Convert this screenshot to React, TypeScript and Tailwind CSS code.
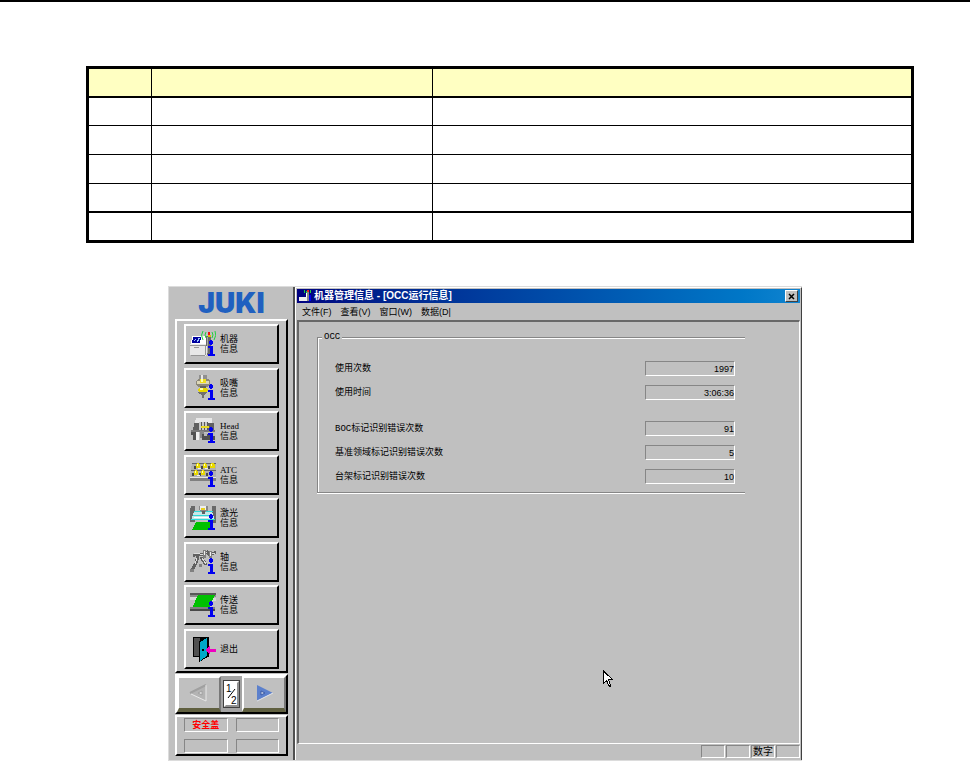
import React from 'react';
import { clsx } from 'clsx';

interface Reading {
  id: string;
  label: string;
  value: string;
  spaced?: boolean;
}

interface NavItem {
  id: string;
  lines: string[];
  icon: React.ReactNode;
}

const readings: Reading[] = [
  { id: 'use-count', label: '使用次数', value: '1997' },
  { id: 'use-time', label: '使用时间', value: '3:06:36' },
  { id: 'boc-errors', label: 'BOC标记识别错误次数', value: '91', spaced: true },
  { id: 'area-errors', label: '基准领域标记识别错误次数', value: '5' },
  { id: 'bank-errors', label: '台架标记识别错误次数', value: '10' },
];

const menus = ['文件(F)', '查看(V)', '窗口(W)', '数据(D|'];

const raised = 'border-2 border-t-white border-l-white border-r-black border-b-black';
const sunken = 'border border-t-[#868686] border-l-[#868686] border-r-white border-b-white';

// blue "i" shared by most of the sidebar icons
function InfoMark() {
  return (
    <g fill="#0000f0">
      <rect x="19" y="10" width="4" height="3" />
      <rect x="20" y="9" width="2" height="5" />
      <path d="M18 15h5v8h2v2h-7v-2h2v-6h-2z" />
    </g>
  );
}

function Icon({ children, info = true }: { children: React.ReactNode; info?: boolean }) {
  return (
    <svg viewBox="0 0 26 26" className="h-[26px] w-[26px] shrink-0" shapeRendering="crispEdges" aria-hidden="true">
      {children}
      {info && <InfoMark />}
    </svg>
  );
}

const MachineIcon = (
  <Icon>
    <path d="M2 5h14v8H1z" fill="#fff" />
    <path d="M3 6h8l-1 6H2z" fill="#0000a0" />
    <path d="M4 10l2-2M7 11l2-3M8 7h2" stroke="#9cc8ff" />
    <path d="M0 13h17v10l-2 2H1l-1-2z" fill="#e8e8e8" />
    <path d="M0 14h17M4 16h5M15 14v10M1 24h14" stroke="#969696" />
    <path d="M16 5h5v19h-4z" fill="#686868" />
    <path d="M17 6h1v16h-1z" fill="#a8a8a8" />
    <rect x="18" y="1" width="2" height="3" fill="#f01010" />
    <rect x="18" y="4" width="3" height="2" fill="#e0c000" />
    <g stroke="#20d040" fill="none" shapeRendering="auto">
      <path d="M16 1q-2 3 0 6M13 0q-3 4 0 9M22 1q2 3 0 6M25 0q2 4-1 9" />
    </g>
  </Icon>
);

const NozzleIcon = (
  <Icon>
    <path d="M9 0h8v4H9z" fill="#909090" />
    <path d="M11 0h2v4h-2z" fill="#e8e8e8" />
    <path d="M8 4h10l2 2v4l-3 2H9l-3-2V6z" fill="#8c8878" />
    <path d="M7 6h12v3H7z" fill="#ddd8b8" />
    <path d="M10 4h6v4h-6z" fill="#f0e020" />
    <path d="M11 4h2v3h-2z" fill="#ffffb0" />
    <path d="M10 11h6v2h-6z" fill="#606060" />
    <path d="M9 13h8l1 2-2 3h-6l-2-3z" fill="#e8d800" />
    <path d="M10 13h3v2h-3z" fill="#ffffa0" />
    <path d="M8 17h9v1l-3 2v3h-2v-3l-4-2z" fill="#707070" />
  </Icon>
);

const HeadIcon = (
  <Icon>
    <path d="M6 0h16v5H5z" fill="#e8e8e8" />
    <path d="M4 5h5v9H3zM17 5h7v9h-7z" fill="#606060" />
    <path d="M9 4h9v10H9z" fill="#c8c8c8" />
    <path d="M11 4v10M14 4v10M17 4v10" stroke="#585858" />
    <path d="M11 8h8v2h-8z" fill="#e8d820" />
    <path d="M1 12h24v2H1z" fill="#787878" />
    <path d="M1 14h8v3H1zM3 17h3v5H3z" fill="#505050" />
    <path d="M6 14h3v8H6z" fill="#eee" />
    <path d="M10 13h4v7h-4z" fill="#888" />
    <path d="M12 16h13v6H12z" fill="#505050" />
    <path d="M14 15h3v3h-3zM22 14h3v4h-3z" fill="#b8b8b8" />
  </Icon>
);

const ToolIcon = (
  <Icon>
    <path d="M2 1h24v14H0z" fill="#b0b0b0" />
    <path d="M2 1h24M1 8h25" stroke="#666" />
    <path d="M4 4h2v3H4zM11 4h2v3h-2zM18 4h2v3h-2zM2 11h2v3H2zM9 11h2v3H9zM16 11h2v3h-2z" fill="#484848" />
    <path d="M7 1h2v1h1v4H6V2h1zM14 1h2v1h1v4h-4V2h1zM21 1h3v1h1v4h-5V2h1z" fill="#e8d800" />
    <path d="M5 8h2v1h1v4H4V9h1zM12 8h2v1h1v4h-4V9h1z" fill="#e8d800" />
    <path d="M7 2h1v2H7zM14 2h1v2h-1zM21 2h1v2h-1zM5 9h1v2H5zM12 9h1v2h-1z" fill="#ffffc0" />
    <path d="M8 6h3v1H8zM15 6h3v1h-3zM7 13h3v1H7z" fill="#eee" />
    <path d="M0 16h26v3H0z" fill="#808080" />
    <path d="M0 15h26v1H0z" fill="#e4e4e4" />
  </Icon>
);

const LaserIcon = (
  <Icon>
    <path d="M1 1h4v16H0V5zM22 1h4v17h-3z" fill="#686868" />
    <path d="M9 1h9v4l-2 2h-5L9 5z" fill="#888" />
    <path d="M10 1h6v4h-6z" fill="#eee" />
    <path d="M11 3h4v2h-4z" fill="#e8d020" />
    <path d="M4 7h18l3 8H1z" fill="#c8e8e8" />
    <path d="M12 6h3v3h-3z" fill="#606060" />
    <path d="M4 6h7M16 6h7M3 10h20M1 14h24" stroke="#30d8d8" />
    <path d="M4 12h18" stroke="#fff" />
    <path d="M6 17h14l4 8H2z" fill="#00c000" />
  </Icon>
);

const AxisIcon = (
  <Icon>
    <g fill="none" stroke="#606060" strokeWidth="3">
      <path d="M3 7l4-2 5 1 5-3 3 3 6-3" />
      <path d="M8 7l-2 7-4 7M11 8l5 8" />
    </g>
    <path d="M4 5l4-1 4 2 5-3M7 9l-2 6M12 9l4 6M21 5l4-1" stroke="#dcdcdc" fill="none" />
    <path d="M0 20h4v3H0zM13 1h3v8h-3zM19 2h3v7h-3zM9 15h3v3H9z" fill="#808080" />
    <path d="M14 2h1v4h-1zM20 3h1v4h-1z" fill="#f0f0f0" />
  </Icon>
);

const ConveyorIcon = (
  <Icon>
    <path d="M0 1h26v2H0z" fill="#585858" />
    <path d="M0 3h26v2H0z" fill="#8a8a8a" />
    <path d="M0 5h9v3H0zM20 6h6v3h-6z" fill="#d8d8d8" />
    <path d="M8 3h17l-6 13H2z" fill="#00c000" />
    <path d="M0 15h25v2H0z" fill="#808080" />
    <path d="M0 17h25v2H0z" fill="#484848" />
  </Icon>
);

const ExitIcon = (
  <Icon info={false}>
    <path d="M3 1h16v20H3z" fill="#000" />
    <path d="M4 2h6v18H4z" fill="#505050" />
    <path d="M9 5l9-4v20l-9 5z" fill="#000" />
    <path d="M10 6l7-4v18l-7 5z" fill="#00a8c8" />
    <path d="M12 13h2v2h-2z" fill="#000" />
    <path d="M15 14l5-4v3h6v3h-6v3z" fill="#f000c0" />
  </Icon>
);

const navItems: NavItem[] = [
  { id: 'machine', lines: ['机器', '信息'], icon: MachineIcon },
  { id: 'nozzle', lines: ['吸嘴', '信息'], icon: NozzleIcon },
  { id: 'head', lines: ['Head', '信息'], icon: HeadIcon },
  { id: 'atc', lines: ['ATC', '信息'], icon: ToolIcon },
  { id: 'laser', lines: ['激光', '信息'], icon: LaserIcon },
  { id: 'axis', lines: ['轴', '信息'], icon: AxisIcon },
  { id: 'conveyor', lines: ['传送', '信息'], icon: ConveyorIcon },
  { id: 'exit', lines: ['退出'], icon: ExitIcon },
];

function BlankTable() {
  const rows = ['h-7', 'h-[29px]', 'h-[29px]', 'h-[29px]', 'h-[27px]'];
  return (
    <table className="w-full table-fixed border-separate border-spacing-0 border-[3px] border-black">
      <colgroup>
        <col className="w-[63px]" />
        <col className="w-[281px]" />
        <col />
      </colgroup>
      <thead>
        <tr className="h-[29px] bg-[#ffffc2]">
          {[0, 1, 2].map((c) => (
            <th key={c} className={clsx('border-b-2 border-black p-0', c < 2 && 'border-r')} />
          ))}
        </tr>
      </thead>
      <tbody>
        {rows.map((height, r) => (
          <tr key={r} className={height}>
            {[0, 1, 2].map((c) => (
              <td
                key={c}
                className={clsx('border-black p-0', c < 2 && 'border-r', r < 3 && 'border-b', r === 3 && 'border-b-2')}
              />
            ))}
          </tr>
        ))}
      </tbody>
    </table>
  );
}

function PageButton({ label, children }: { label: string; children: React.ReactNode }) {
  return (
    <button
      type="button"
      aria-label={label}
      className="flex h-9 flex-1 items-center justify-center border-2 border-b-4 border-t-white border-l-white border-r-[#787878] border-b-[#606040] bg-[#c0c0c0]"
    >
      {children}
    </button>
  );
}

function Sidebar() {
  return (
    <aside className="flex w-[127px] shrink-0 flex-col border-l border-r-2 border-l-[#dcdcdc] border-r-[#505050] pr-[5px] pb-1 pl-1.5">
      <div className="flex h-8 items-center justify-center font-['Inter','Liberation_Sans',sans-serif] text-[28px] leading-8 font-black text-[#2060c0]">
        JUKI
      </div>
      <nav className={clsx('flex h-[354px] flex-col justify-between px-[7px] pt-[3px] pb-0.5', raised)}>
        {navItems.map((item) => (
          <button
            key={item.id}
            type="button"
            className={clsx('flex h-10 items-center gap-1 px-1 text-left', raised)}
          >
            {item.icon}
            <span className="flex flex-col font-['Liberation_Serif','Noto_Sans_CJK_SC',serif] leading-[10px]">
              {item.lines.map((line) => (
                <span key={line}>{line}</span>
              ))}
            </span>
          </button>
        ))}
      </nav>
      <div className={clsx('mt-px flex h-10 items-center bg-[#a4a4a4]', raised)}>
        <PageButton label="上一页">
          <svg viewBox="0 0 20 20" className="h-5 w-5" aria-hidden="true">
            <path d="M1 10L17 2v16z" fill="#b4b4b4" />
            <path d="M1 10l16-8" stroke="#a0a0a0" strokeWidth="2" />
            <path d="M2 11l15 7V2" stroke="#e8e8e8" fill="none" />
            <path d="M9 10l4-2v4z" fill="#e4e4e4" stroke="#a0a0a0" />
          </svg>
        </PageButton>
        <span className="mx-[3px] flex h-[26px] w-[15px] flex-col border-2 border-t-white border-l-white border-r-[#909090] border-b-[#909090] bg-white outline outline-[#404040]">
          <svg viewBox="0 0 11 22" className="h-[22px] w-[11px]">
            <text x="0" y="9" fontSize="10" fontFamily="Liberation Sans, sans-serif">1</text>
            <path d="M2 15l7-9" stroke="#000" />
            <text x="5" y="21" fontSize="10" fontFamily="Liberation Sans, sans-serif">2</text>
          </svg>
        </span>
        <PageButton label="下一页">
          <svg viewBox="0 0 20 20" className="h-5 w-5" aria-hidden="true">
            <path d="M3 2l16 8-16 8z" fill="#5c80cc" />
            <path d="M3 18l16-8" stroke="#e8e8e8" />
            <path d="M7 8l4 2-4 2z" fill="#d0d8e8" stroke="#3c5ca8" />
          </svg>
        </PageButton>
      </div>
      <div
        className={clsx('mt-px grid h-[41px] grid-cols-2 grid-rows-2 gap-x-2 gap-y-[7px] px-[7px] pt-px pb-0.5', raised)}
      >
        <span className={clsx('flex h-3.5 items-center justify-center leading-3 font-bold text-[#ff0000]', sunken)}>
          安全盖
        </span>
        <span className={clsx('h-3.5', sunken)} />
        <span className={clsx('h-3.5', sunken)} />
        <span className={clsx('h-3.5', sunken)} />
      </div>
    </aside>
  );
}

function TitleBar() {
  return (
    <header className="flex h-3.5 items-center gap-0.5 bg-gradient-to-r from-[#000080] to-[#1084d0] px-0.5 text-[10px] leading-[14px] font-bold text-white">
      <svg viewBox="0 0 13 12" className="h-3 w-[13px]" shapeRendering="crispEdges" aria-hidden="true">
        <path d="M1 3h6v4H0v4h8V3z" fill="#fff" />
        <path d="M0 7h8v4H0z" fill="#eee" />
        <path d="M2 4h3v2H2z" fill="#000080" />
        <path d="M5 0v3M7 1v2M11 0v3" stroke="#20d040" />
        <path d="M8 2h2v9H8z" fill="#888" />
        <path d="M8 0h2v2H8z" fill="#f02020" />
        <path d="M10 5h2v6h-2z" fill="#0000f0" />
      </svg>
      <h1 className="flex-1 whitespace-pre">机器管理信息 - [OCC运行信息]</h1>
      <button
        type="button"
        aria-label="关闭"
        className="flex h-3 w-[13px] items-center justify-center border border-t-white border-l-white border-r-[#404040] border-b-[#404040] bg-[#c0c0c0]"
      >
        <svg viewBox="0 0 7 7" className="h-[7px] w-[7px]" aria-hidden="true">
          <path d="M1 1l5 5M6 1L1 6" stroke="#000" strokeWidth="1.5" />
        </svg>
      </button>
    </header>
  );
}

function StatusBar() {
  return (
    <footer className="flex h-4 justify-end gap-px pt-px pb-0.5 leading-3">
      {['', '', '数字', ''].map((text, i) => (
        <span key={i} className={clsx('w-6 text-center text-[10px] whitespace-nowrap', sunken)}>
          {text}
        </span>
      ))}
    </footer>
  );
}

export default function App() {
  return (
    <div className="border-t-2 border-black bg-white font-['Liberation_Sans','Noto_Sans_CJK_SC',sans-serif] text-[9px] text-black">
      <div className="pt-16 pr-14 pl-[86px]">
        <BlankTable />
      </div>

      <div className="mx-[168px] mt-[43px] flex border-t border-b border-[#dcdcdc] bg-[#c0c0c0]">
        <Sidebar />
        <main className="flex min-w-0 flex-1 flex-col border-t border-r border-l border-t-white border-r-[#404040] border-l-white pt-px pr-px pl-px">
          <TitleBar />
          <nav className="flex h-[17px] items-center gap-[9px] pl-[5px]">
            {menus.map((menu) => (
              <button key={menu} type="button" className="leading-3">
                {menu}
              </button>
            ))}
          </nav>
          <section className="relative flex-1 border-t-2 border-r border-b border-l-2 border-t-[#686868] border-l-[#686868] border-r-white border-b-white pt-[9px] pr-[54px] pl-[18px]">
            <fieldset className="border border-r-0 border-[#868686] px-[10px] pt-[18px] pb-2 pl-[17px] shadow-[inset_1px_1px_0_#fff,0_1px_0_#fff]">
              <legend className="-ml-[13px] bg-[#c0c0c0] px-0.5 font-['Liberation_Mono',monospace] leading-3">OCC</legend>
              <div className="flex flex-col gap-[9px]">
                {readings.map((r) => (
                  <div key={r.id} className={clsx('flex h-[15px] items-center justify-between', r.spaced && 'mt-3')}>
                    <label
                      htmlFor={r.id}
                      className="font-['Liberation_Mono','Noto_Sans_CJK_SC',monospace] leading-3"
                    >
                      {r.label}
                    </label>
                    <input
                      id={r.id}
                      type="text"
                      readOnly
                      value={r.value}
                      className={clsx('h-[15px] w-[90px] bg-transparent text-right outline-none', sunken)}
                    />
                  </div>
                ))}
              </div>
            </fieldset>
            <svg
              viewBox="0 0 11 17"
              className="absolute top-[348px] left-[304px] h-[17px] w-[11px]"
              shapeRendering="crispEdges"
              aria-hidden="true"
            >
              <path d="M0 0v14l3-3 3 6h2v-2l-2-5h5z" fill="#000" />
              <path d="M1 3v9l3-2 2 5h1L5 9h4z" fill="#fff" />
            </svg>
          </section>
          <StatusBar />
        </main>
      </div>
    </div>
  );
}
